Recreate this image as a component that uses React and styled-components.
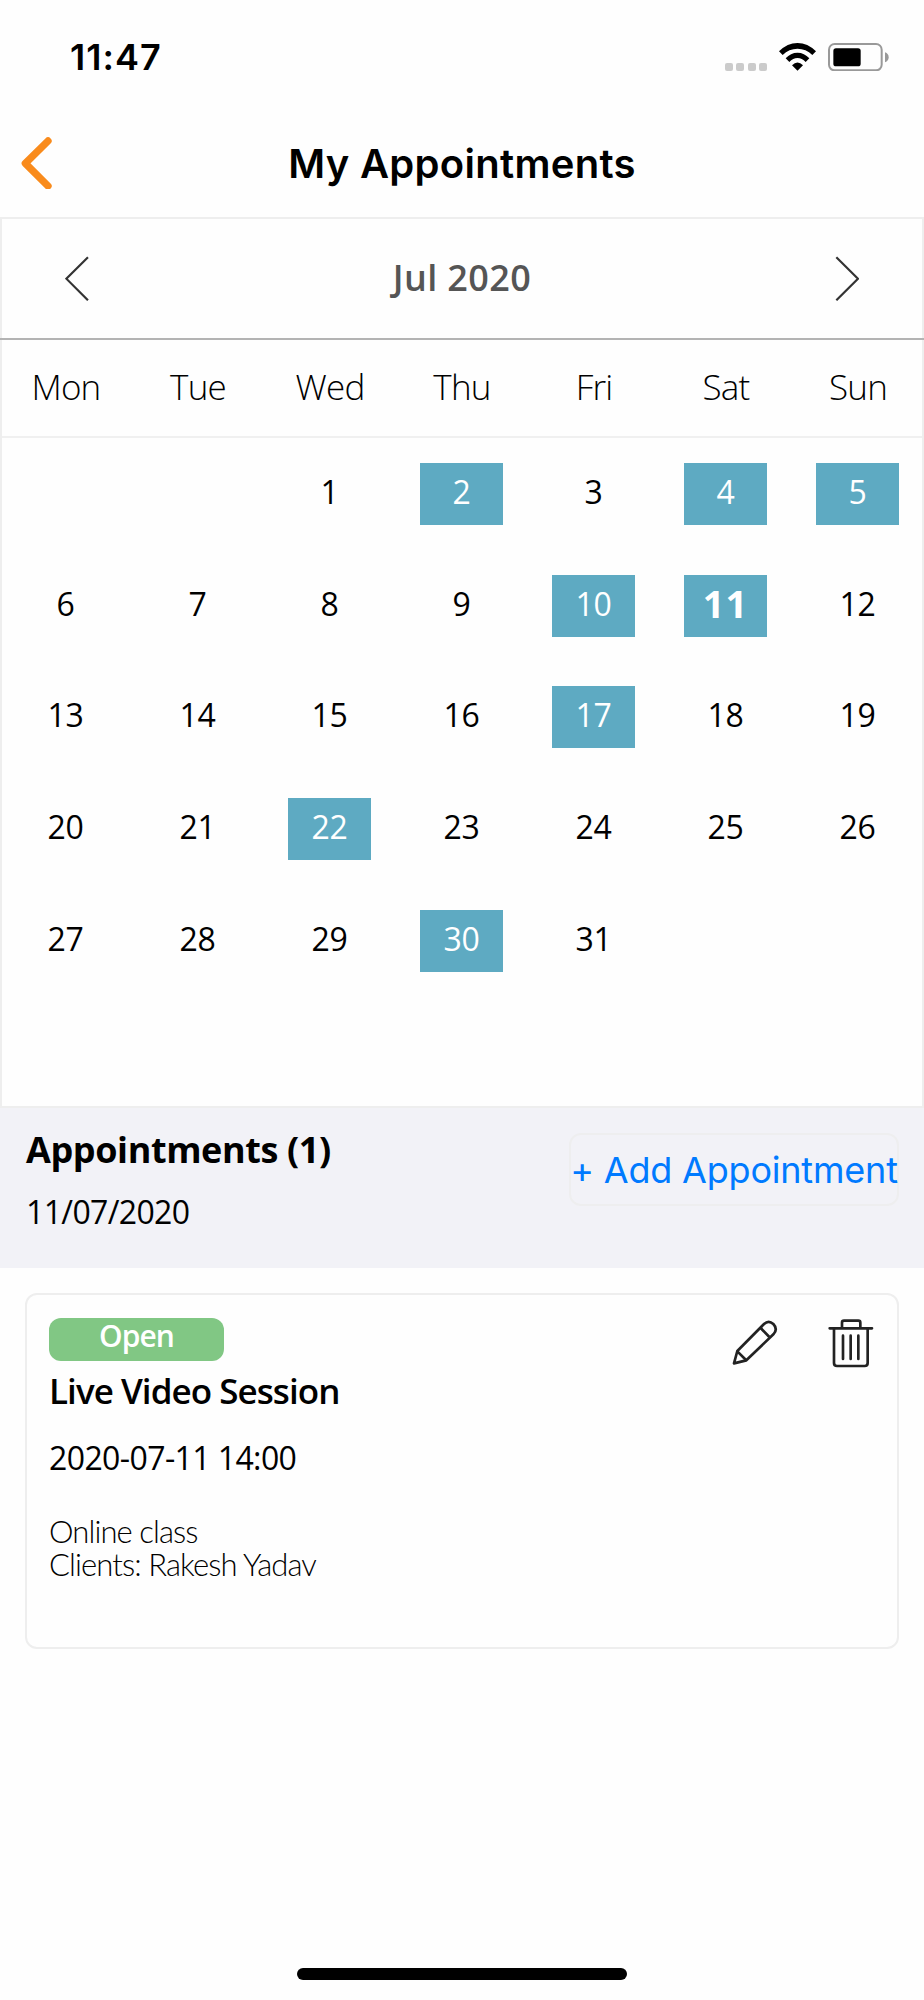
import styled, { createGlobalStyle } from 'styled-components'

const GlobalStyle = createGlobalStyle`
  *, *::before, *::after {
    box-sizing: border-box;
  }
  body {
    margin: 0;
    background-color: #fff;
    color: #000;
    font-family: 'Open Sans', 'Noto Sans', sans-serif;
  }
  h1, h2, h3, p {
    margin: 0;
  }
  button {
    padding: 0;
    border: none;
    background: none;
    font: inherit;
  }
  svg {
    display: block;
  }
`
const Screen = styled.div`
  width: 924px;
  height: 2000px;
  display: flex;
  flex-direction: column;
  background-color: #fefefe;
  white-space: nowrap;
`
const StatusBar = styled.div`
  height: 114px;
  padding: 0 35px 0 70px;
  display: flex;
  justify-content: space-between;
  align-items: center;
`
const Time = styled.span`
  font-family: Inter, sans-serif;
  font-size: 36px;
  font-weight: 600;
  letter-spacing: 1px;
`
const StatusIcons = styled.div`
  display: flex;
  align-items: flex-end;
  gap: 12px;
`
const Dots = styled.div`
  display: flex;
  gap: 3.5px;
`
const Dot = styled.span`
  width: 8px;
  height: 8px;
  border-radius: 2px;
  background-color: #cbcbcb;
`
const Header = styled.header`
  height: 103px;
  padding: 0 21px 5px;
  display: grid;
  grid-template-columns: 1fr auto 1fr;
  align-items: center;
`
const Title = styled.h1`
  font-family: Inter, sans-serif;
  font-size: 40px;
  font-weight: 600;
  letter-spacing: 0.3px;
`
const Calendar = styled.section`
  height: 891px;
  border: 2px solid #eee;
`
const MonthBar = styled.div`
  height: 121px;
  margin: 0 -2px;
  padding: 0 65px;
  display: flex;
  justify-content: space-between;
  align-items: center;
  border-bottom: 2px solid #b3b3b3;
`
const Month = styled.h2`
  padding-bottom: 2px;
  color: #555;
  font-size: 36px;
  font-weight: 600;
  letter-spacing: 0.4px;
`
const Weekdays = styled.div`
  height: 98px;
  padding-bottom: 4px;
  display: grid;
  grid-template-columns: repeat(7, 132px);
  justify-content: center;
  align-items: center;
  border-bottom: 2px solid #f0f0f0;
`
const Weekday = styled.span`
  text-align: center;
  font-size: 35px;
  font-weight: 300;
  letter-spacing: -0.8px;
`
const Weeks = styled.div`
  height: 668px;
  margin-left: -1px;
  padding-top: 0.5px;
  display: grid;
  grid-template-columns: repeat(7, 132px);
  grid-auto-rows: 111.6px;
  justify-content: center;
  align-items: center;
  justify-items: center;
`
const Day = styled.button`
  width: 83px;
  height: 62px;
  padding-bottom: ${(props) => (props.$selected ? '6px' : '4px')};
  display: flex;
  justify-content: center;
  align-items: center;
  background-color: ${(props) => (props.$booked ? '#5eaac2' : 'transparent')};
  color: ${(props) => (props.$booked ? '#fff' : '#000')};
  font-size: ${(props) => (props.$selected ? '38px' : '32px')};
  font-weight: ${(props) => (props.$selected ? 700 : 400)};
  letter-spacing: ${(props) => (props.$selected ? '1px' : '-0.4px')};
  line-height: 44px;
`
const Summary = styled.section`
  height: 160px;
  padding: 0 25px 0 26px;
  display: flex;
  justify-content: space-between;
  align-items: flex-start;
  background-color: #f2f2f7;
`
const SummaryTitle = styled.h2`
  margin-top: 19px;
  font-size: 36px;
  font-weight: 700;
  letter-spacing: -0.4px;
  line-height: 46px;
`
const SummaryDate = styled.p`
  margin-top: 14px;
  font-size: 32px;
  letter-spacing: -0.65px;
  line-height: 50px;
`
const AddButton = styled.button`
  width: 330px;
  height: 73px;
  margin-top: 25px;
  display: flex;
  justify-content: center;
  align-items: center;
  border: 2px solid #eeeeef;
  border-radius: 12px;
  color: #007aff;
  font-family: Inter, sans-serif;
  font-size: 36px;
  letter-spacing: -0.2px;
`
const Card = styled.article`
  height: 356px;
  margin: 25px 25px 0;
  padding: 22px;
  display: flex;
  justify-content: space-between;
  align-items: flex-start;
  border: 2px solid #eee;
  border-radius: 12px;
`
const Badge = styled.span`
  width: 175px;
  height: 43px;
  margin-top: 1px;
  padding-bottom: 7px;
  display: flex;
  justify-content: center;
  align-items: center;
  border-radius: 12px;
  background-color: #81c784;
  color: #fff;
  font-size: 30px;
  font-weight: 600;
  letter-spacing: -0.9px;
  line-height: 36px;
`
const CardTitle = styled.h3`
  margin-top: 7px;
  font-size: 35px;
  font-weight: 600;
  letter-spacing: -0.95px;
  line-height: 46px;
`
const CardDate = styled.p`
  margin-top: 24px;
  font-size: 32px;
  letter-spacing: -0.6px;
  line-height: 40px;
`
const Details = styled.div`
  margin-top: 37px;
  font-family: Lato, 'Open Sans', sans-serif;
  font-size: 31px;
  font-weight: 300;
  letter-spacing: -0.9px;
  line-height: 32.5px;
`
const Actions = styled.div`
  display: flex;
  gap: 48px;
  margin-top: 1px;
`
const HomeIndicator = styled.div`
  width: 330px;
  height: 12px;
  margin: auto auto 20px;
  border-radius: 6px;
  background-color: #000;
`

const weekdays = ['Mon', 'Tue', 'Wed', 'Thu', 'Fri', 'Sat', 'Sun']
const days = Array.from({ length: 31 }, (_, i) => i + 1)
const booked = [2, 4, 5, 10, 11, 17, 22, 30]
const selected = 11

function WifiIcon() {
  return (
    <svg width="37" height="27.7" viewBox="237 68 111 83">
      <path d="M237 93Q262 68 292.500 68T348 93L337 104Q318 85 292.500 85T248 104Z" />
      <path d="M257 114Q272 97 292.500 97T328 114L317 125Q306 113 292.500 113T268 125Z" />
      <path d="M276 135Q292.500 118 309 135L292.500 151Z" />
    </svg>
  )
}

function BatteryIcon() {
  return (
    <svg width="60.700" height="28" viewBox="385 68 182 84">
      <rect x="388" y="71" width="158" height="79" rx="17" fill="none" stroke="#999" strokeWidth="6" />
      <rect x="401" y="84" width="82" height="54" rx="8" />
      <path d="M556 96Q567 100 567 111T556 126Z" fill="#999" />
    </svg>
  )
}

function BackIcon() {
  return (
    <svg width="31" height="52.700" viewBox="64 410 93 158">
      <path d="M145 422L77 489L145 557" fill="none" stroke="#f98b1c" strokeWidth="22" strokeLinecap="round" strokeLinejoin="round" />
    </svg>
  )
}

function PrevIcon() {
  return (
    <svg width="24.300" height="45.300" viewBox="194 767 73 136">
      <path d="M263 771L198 835L263 900" fill="none" stroke="#333" strokeWidth="6.500" />
    </svg>
  )
}

function NextIcon() {
  return (
    <svg width="24.300" height="45.300" viewBox="0 0 73 136">
      <path d="M4 4L69 68L4 133" fill="none" stroke="#333" strokeWidth="6.500" />
    </svg>
  )
}

function EditIcon() {
  return (
    <svg width="48" height="48" viewBox="94 86 144 144" fill="none" stroke="#222" strokeWidth="8" strokeLinejoin="round">
      <path d="M103 222L113 185L193 104Q207 91 221 104Q235 119 222 134L140 213Z" />
      <path d="M183 116L209 143M113 186L139 212" />
    </svg>
  )
}

function TrashIcon() {
  return (
    <svg width="48" height="50" viewBox="382 84 144 150" fill="none" stroke="#222" strokeWidth="8" strokeLinecap="round">
      <path d="M390 115H517M427 114V98Q427 92 433 92H476Q482 92 482 98V114" />
      <path d="M403 116V219Q403 228 412 228H495Q504 228 504 219V116" />
      <path d="M430 137V207M453 137V207M476 137V207" />
    </svg>
  )
}

function App() {
  return (
    <Screen>
      <GlobalStyle />
      <StatusBar>
        <Time>11:47</Time>
        <StatusIcons>
          <Dots>
            <Dot />
            <Dot />
            <Dot />
            <Dot />
          </Dots>
          <WifiIcon />
          <BatteryIcon />
        </StatusIcons>
      </StatusBar>
      <Header>
        <BackIcon />
        <Title>My Appointments</Title>
      </Header>
      <Calendar>
        <MonthBar>
          <PrevIcon />
          <Month>Jul 2020</Month>
          <NextIcon />
        </MonthBar>
        <Weekdays>
          {weekdays.map((day) => (
            <Weekday key={day}>{day}</Weekday>
          ))}
        </Weekdays>
        <Weeks>
          {/* July 2020 starts on a Wednesday */}
          <span />
          <span />
          {days.map((day) => (
            <Day key={day} $booked={booked.includes(day)} $selected={day === selected}>
              {day}
            </Day>
          ))}
        </Weeks>
      </Calendar>
      <Summary>
        <div>
          <SummaryTitle>Appointments (1)</SummaryTitle>
          <SummaryDate>11/07/2020</SummaryDate>
        </div>
        <AddButton>+ Add Appointment</AddButton>
      </Summary>
      <Card>
        <div>
          <Badge>Open</Badge>
          <CardTitle>Live Video Session</CardTitle>
          <CardDate>2020-07-11 14:00</CardDate>
          <Details>
            <p>Online class</p>
            <p>Clients: Rakesh Yadav</p>
          </Details>
        </div>
        <Actions>
          <EditIcon />
          <TrashIcon />
        </Actions>
      </Card>
      <HomeIndicator />
    </Screen>
  )
}

export default App
